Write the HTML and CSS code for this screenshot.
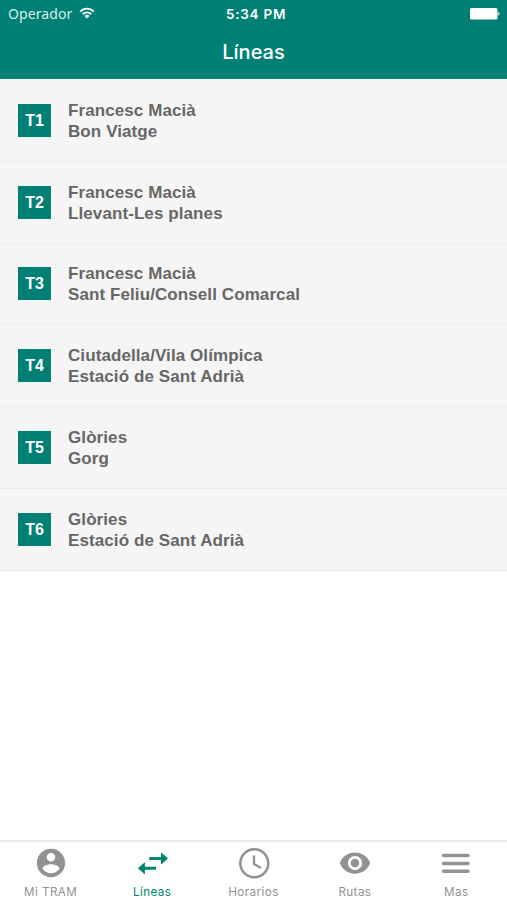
FILE: index.html
```html
<!DOCTYPE html>
<html lang="es">
<head>
<meta charset="utf-8">
<title>Líneas</title>
<link rel="stylesheet" href="styles.css">
</head>
<body>
<div class="app">
  <header class="header">
    <div class="status">
      <div class="carrier"><span>Operador</span>
        <svg class="wifi" width="16" height="12" viewBox="0 0 16 12" fill="none" stroke="currentColor" stroke-width="1.8"><path d="M1.2 4.5a9.6 9.6 0 0 1 13.6 0M3.7 7.2a6.1 6.1 0 0 1 8.6 0"/><path d="M8 11.6 5.5 9.1a3.5 3.5 0 0 1 5 0z" fill="currentColor" stroke="none"/></svg>
      </div>
      <span class="time">5:34 PM</span>
      <svg class="battery" width="30" height="12" viewBox="0 0 30 12" fill="currentColor"><rect x="0" y="0" width="27.5" height="11.5" rx="1.5"/><path d="M28.2 4c1.800.4 1.800 3.200 0 3.600z"/></svg>
    </div>
    <h1 class="title">Líneas</h1>
  </header>
  <main class="content">
    <ul class="lines">
      <li class="line"><span class="badge">T1</span><div class="stops"><span>Francesc Macià</span><span>Bon Viatge</span></div></li>
      <li class="line"><span class="badge">T2</span><div class="stops"><span>Francesc Macià</span><span>Llevant-Les planes</span></div></li>
      <li class="line"><span class="badge">T3</span><div class="stops"><span>Francesc Macià</span><span>Sant Feliu/Consell Comarcal</span></div></li>
      <li class="line"><span class="badge">T4</span><div class="stops"><span>Ciutadella/Vila Olímpica</span><span>Estació de Sant Adrià</span></div></li>
      <li class="line"><span class="badge">T5</span><div class="stops"><span>Glòries</span><span>Gorg</span></div></li>
      <li class="line"><span class="badge">T6</span><div class="stops"><span>Glòries</span><span>Estació de Sant Adrià</span></div></li>
    </ul>
  </main>
  <nav class="tabs">
    <a class="tab"><svg width="34" height="34" viewBox="0 0 24 24" fill="currentColor"><path d="M12 2C6.480 2 2 6.480 2 12s4.480 10 10 10 10-4.480 10-10S17.520 2 12 2zm0 3c1.660 0 3 1.340 3 3s-1.340 3-3 3-3-1.340-3-3 1.340-3 3-3zm0 14.200c-2.500 0-4.710-1.280-6-3.220.030-1.990 4-3.080 6-3.080 1.990 0 5.970 1.090 6 3.080-1.290 1.940-3.500 3.220-6 3.220z"/></svg><span>Mi TRAM</span></a>
    <a class="tab active"><svg width="34" height="34" viewBox="0 0 34 34" fill="currentColor"><path d="M14.300 10.900H26V6.300L33 12.400l-7 6.100v-4.600H14.300zM21 20.800H9.900v-4.600L2.900 22.300l7 6.100v-4.600H21z"/></svg><span>Líneas</span></a>
    <a class="tab"><svg width="34" height="34" viewBox="0 0 34 34" fill="none" stroke="currentColor" stroke-width="2.500"><circle cx="17.300" cy="17.300" r="14"/><path d="M17 9.400v8.600l7 4" stroke-width="2.300"/></svg><span>Horarios</span></a>
    <a class="tab"><svg width="34" height="34" viewBox="0 0 24 24" fill="currentColor"><path d="M12 4.500C7 4.500 2.730 7.610 1.300 12c1.430 4.390 5.700 7.500 10.700 7.500s9.270-3.110 10.700-7.500c-1.430-4.390-5.700-7.500-10.700-7.500zM12 17c-2.760 0-5-2.240-5-5s2.240-5 5-5 5 2.240 5 5-2.240 5-5 5zm0-8c-1.660 0-3 1.340-3 3s1.340 3 3 3 3-1.340 3-3-1.340-3-3-3z"/></svg><span>Rutas</span></a>
    <a class="tab"><svg width="34" height="34" viewBox="0 0 34 34" stroke="currentColor" stroke-width="3.500" stroke-linecap="round"><path d="M4.500 9.600h24.500M4.500 17.400h24.500M4.500 25.300h24.500"/></svg><span>Mas</span></a>
  </nav>
</div>
</body>
</html>
```
FILE: styles.css
```css
* { box-sizing: border-box; }
body { margin: 0; background: #fff; font-family: Inter, "Liberation Sans", sans-serif; }
.app { height: 900px; display: flex; flex-direction: column; }
.header { height: 79px; flex: none; background: #008075; color: #fff; }
.status {
  height: 28px;
  display: grid;
  grid-template-columns: 1fr auto 1fr;
  align-items: center;
  padding: 0 7px 0 8px;
  font-size: 13px;
}
.carrier { display: flex; align-items: center; gap: 7px; margin-top: -2px; font-family: "Noto Sans", sans-serif; font-size: 14px; letter-spacing: .1px; color: #d6efeb; }
.wifi { margin-top: -1px; color: #fff; }
.time { font-weight: 600; font-size: 13.5px; letter-spacing: .75px; padding-left: 4px; }
.battery { justify-self: end; }
.title { margin: 8px 0 0; text-align: center; font-size: 20px; line-height: 32px; font-weight: 500; }
.content { flex: 1; }
.lines { margin: 0; padding: 1px 0 0; list-style: none; background: #f5f5f5; }
.line {
  height: 81.8px;
  display: flex;
  align-items: center;
  gap: 17px;
  padding-left: 18px;
  border-bottom: 1px solid #ebebeb;
}
.badge {
  width: 33px;
  height: 33px;
  background: #008075;
  color: #fff;
  font: bold 16px/34px "Liberation Sans", sans-serif;
  text-align: center;
}
.stops {
  display: flex;
  flex-direction: column;
  padding-top: 1px;
  color: #676767;
  font: bold 17px/21px "Liberation Sans", sans-serif;
  letter-spacing: .09px;
}
.tabs { height: 60px; flex: none; display: flex; border-top: 2px solid #ebebeb; }
.tab {
  flex: 1;
  display: flex;
  flex-direction: column;
  align-items: center;
  padding-top: 4px;
  color: #929292;
  font-size: 11.7px;
  line-height: 16px;
  letter-spacing: .4px;
}
.tab span { margin-top: 4px; }
.active { color: #008572; }
```
